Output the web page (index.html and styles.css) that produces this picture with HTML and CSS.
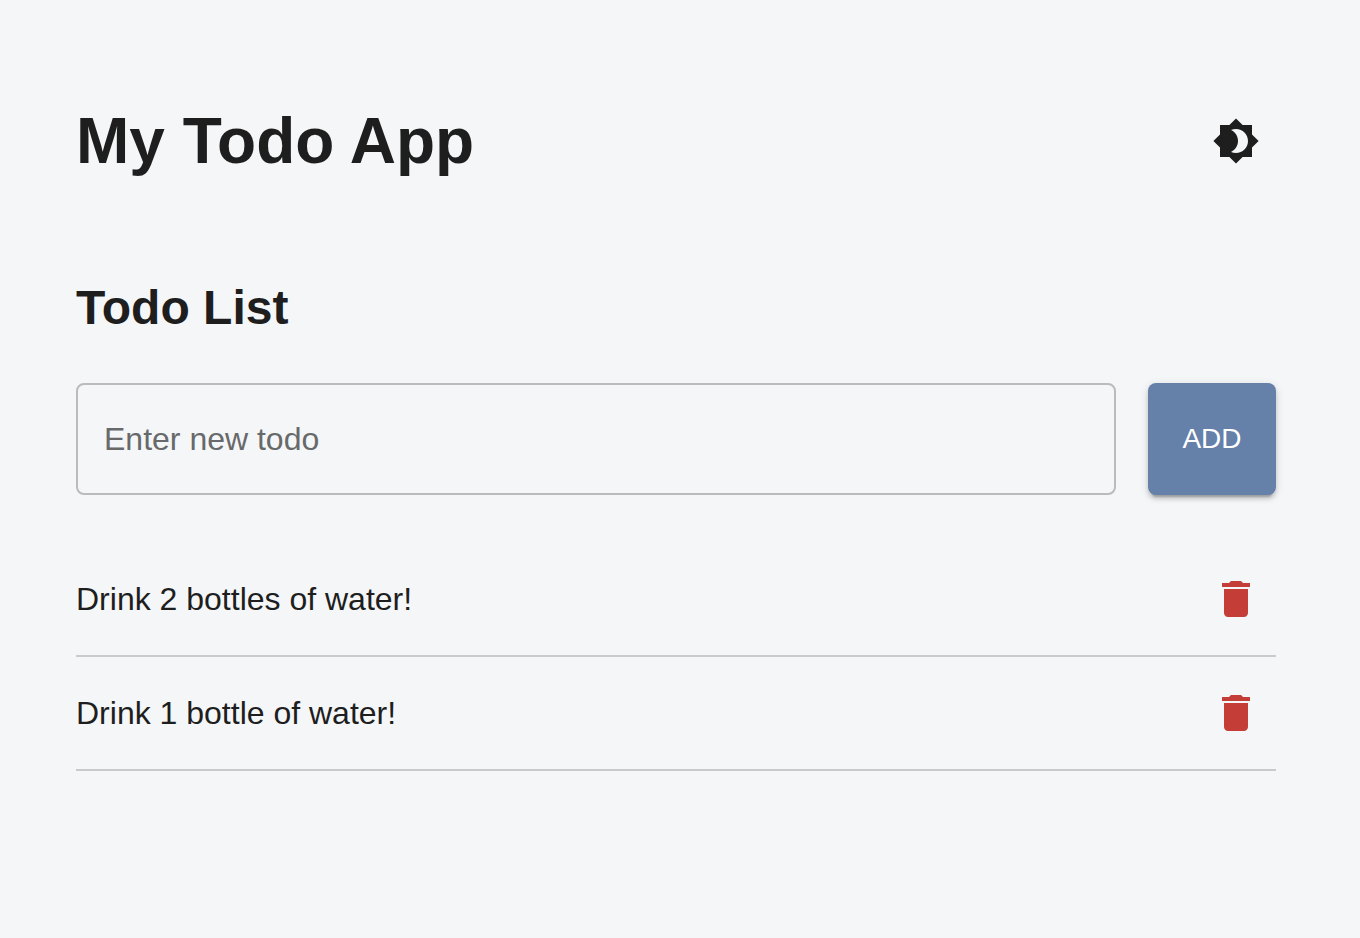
FILE: index.html
```html
<!DOCTYPE html>
<html lang="en">
<head>
<meta charset="utf-8">
<meta name="viewport" content="width=device-width, initial-scale=1">
<title>My Todo App</title>
<link rel="stylesheet" href="styles.css">
</head>
<body>
<div class="app">
  <header class="app-header">
    <h1 class="app-title">My Todo App</h1>
    <button class="icon-button" type="button" aria-label="Toggle theme">
      <svg class="icon-theme" viewBox="0 0 24 24" aria-hidden="true"><path d="M20 8.690V4h-4.690L12 .69 8.690 4H4v4.690L.69 12 4 15.310V20h4.690L12 23.310 15.310 20H20v-4.690L23.310 12 20 8.690zM12 18c-.89 0-1.740-.2-2.500-.55C11.560 16.500 13 14.420 13 12s-1.440-4.500-3.500-5.450C10.260 6.200 11.110 6 12 6c3.310 0 6 2.690 6 6s-2.690 6-6 6z"/></svg>
    </button>
  </header>
  <main>
    <h2 class="section-title">Todo List</h2>
    <form class="todo-form">
      <input class="todo-input" type="text" placeholder="Enter new todo" aria-label="Enter new todo">
      <button class="add-button" type="button">ADD</button>
    </form>
    <ul class="todo-list">
      <li class="todo-item">
        <span class="todo-text">Drink 2 bottles of water!</span>
        <button class="icon-button" type="button" aria-label="Delete Drink 2 bottles of water!">
          <svg class="icon-delete" viewBox="0 0 24 24" aria-hidden="true"><path d="M6 19c0 1.100.9 2 2 2h8c1.100 0 2-.9 2-2V7H6v12zM19 4h-3.500l-1-1h-5l-1 1H5v2h14V4z"/></svg>
        </button>
      </li>
      <li class="todo-item">
        <span class="todo-text">Drink 1 bottle of water!</span>
        <button class="icon-button" type="button" aria-label="Delete Drink 1 bottle of water!">
          <svg class="icon-delete" viewBox="0 0 24 24" aria-hidden="true"><path d="M6 19c0 1.100.9 2 2 2h8c1.100 0 2-.9 2-2V7H6v12zM19 4h-3.500l-1-1h-5l-1 1H5v2h14V4z"/></svg>
        </button>
      </li>
    </ul>
  </main>
</div>
</body>
</html>
```
FILE: styles.css
```css
* {
  box-sizing: border-box;
}

body {
  margin: 0;
  background: #f5f6f8;
  color: #1e1e1e;
  font-family: "Liberation Sans", Arial, Helvetica, sans-serif;
  font-size: 32px;
  line-height: 48px;
}

.app {
  padding: 96px 84px 96px 76px;
}

.app-header {
  display: flex;
  align-items: center;
  justify-content: space-between;
  margin-bottom: 83px;
}

.app-title {
  margin: 0;
  font-size: 64px;
  line-height: 90px;
}

.section-title {
  margin: 0 0 37px;
  font-size: 48px;
  line-height: 77px;
}

.icon-button {
  display: flex;
  padding: 16px;
  border: 0;
  border-radius: 50%;
  background: transparent;
  color: inherit;
  cursor: pointer;
}

.icon-theme,
.icon-delete {
  width: 48px;
  height: 48px;
  fill: currentColor;
}

.icon-delete {
  color: #c43e37;
}

.todo-form {
  display: flex;
  gap: 32px;
  margin-bottom: 48px;
}

.todo-input {
  flex: 1;
  min-width: 0;
  height: 112px;
  padding: 0 26px;
  border: 2px solid #babbbd;
  border-radius: 8px;
  background: transparent;
  color: inherit;
  font: inherit;
}

.todo-input::placeholder {
  color: #68696a;
  opacity: 1;
}

.add-button {
  width: 128px;
  border: 0;
  border-radius: 8px;
  background: #6580a9;
  box-shadow:
    0 6px 2px -4px rgba(0, 0, 0, 0.2),
    0 4px 4px 0 rgba(0, 0, 0, 0.14),
    0 2px 10px 0 rgba(0, 0, 0, 0.12);
  color: #fff;
  font: inherit;
  font-size: 28px;
  cursor: pointer;
}

.todo-list {
  margin: 0;
  padding: 0;
  list-style: none;
}

.todo-item {
  display: flex;
  align-items: center;
  justify-content: space-between;
  height: 114px;
  border-bottom: 2px solid #c9cacc;
}
```
